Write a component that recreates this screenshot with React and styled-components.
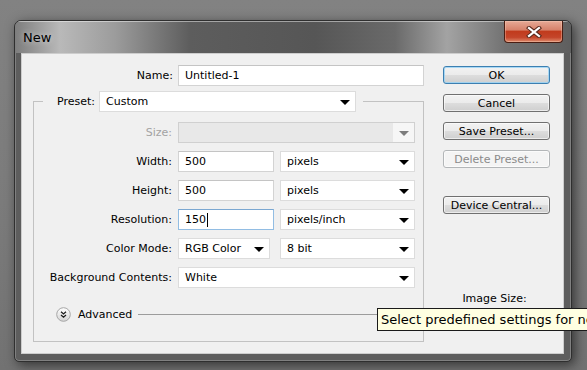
import React from "react";
import styled, { createGlobalStyle } from "styled-components";

const GlobalStyle = createGlobalStyle`
  html, body {
    margin: 0;
    padding: 0;
  }
  body {
    font-family: "DejaVu Sans", Tahoma, sans-serif;
    font-size: 11px;
    color: #000;
  }
`;

const Desktop = styled.div`
  position: relative;
  width: 587px;
  height: 370px;
  box-sizing: border-box;
  overflow: hidden;
  padding: 20px 0 0 14px;
  background: linear-gradient(180deg, #828282 0%, #7b7b7b 55%, #727272 100%);
`;

const Window = styled.div`
  width: 558px;
  height: 342px;
  box-sizing: border-box;
  border: 1px solid #2f2f2f;
  border-radius: 7px 7px 5px 5px;
  background: #5d5d5d;
  box-shadow: inset 0 0 0 1px rgba(255, 255, 255, 0.22), 3px 3px 12px rgba(0, 0, 0, 0.55);
  display: flex;
  flex-direction: column;
  overflow: hidden;
`;

const TitleBar = styled.div`
  height: 32px;
  display: flex;
  align-items: flex-start;
  justify-content: space-between;
  background: linear-gradient(
    90deg,
    #7d7d7d 0px,
    #b9b9b9 45px,
    #9c9c9c 100px,
    #5d5d5d 175px,
    #565656 300px,
    #6a6a6a 380px,
    #a3a3a3 432px,
    #727272 490px,
    #5e5e5e 558px
  );
  box-shadow: inset 0 1px 0 rgba(255, 255, 255, 0.45);
`;

const Title = styled.span`
  font-size: 13px;
  padding: 9px 0 0 8px;
  color: #000;
  text-shadow: 0 0 6px rgba(255, 255, 255, 0.6);
`;

const CloseButton = styled.div`
  width: 59px;
  height: 22px;
  margin-right: 8px;
  box-sizing: border-box;
  border: 1px solid #4a1d12;
  border-top: none;
  border-radius: 0 0 4px 4px;
  display: flex;
  align-items: center;
  justify-content: center;
  background: linear-gradient(
    180deg,
    #e6a996 0%,
    #d6826b 42%,
    #c13b1d 50%,
    #c4452a 78%,
    #de8c6d 100%
  );
  box-shadow: inset 0 0 0 1px rgba(255, 220, 200, 0.35);
`;

const Client = styled.div`
  flex: 1;
  margin: 0 7px 7px 6px;
  border: 1px solid #cdcdcd;
  background: #f0f0f0;
  display: flex;
  padding: 11px 0 0 11px;
`;

const FormPanel = styled.div`
  width: 391px;
  display: flex;
  flex-direction: column;
`;

const NameRow = styled.div`
  display: grid;
  grid-template-columns: 140px 1fr;
  column-gap: 5px;
  align-items: center;
`;

const Label = styled.span`
  text-align: right;
  white-space: nowrap;
  color: ${(p) => (p.$disabled ? "#a3a3a3" : "#000")};
`;

const TextField = styled.div`
  height: 21px;
  box-sizing: border-box;
  background: #fff;
  border: 1px solid ${(p) => (p.$focused ? "#92bde3" : "#d3d3d3")};
  border-top-color: ${(p) => (p.$focused ? "#7aa7d1" : "#c4c4c4")};
  display: flex;
  align-items: center;
  padding-left: 6px;
  width: ${(p) => (p.$width ? `${p.$width}px` : "auto")};
`;

const Caret = styled.span`
  display: inline-block;
  width: 1px;
  height: 14px;
  margin-left: 1px;
  background: #000;
`;

const Select = styled.div`
  height: 21px;
  box-sizing: border-box;
  background: ${(p) => (p.$disabled ? "#e8e8e8" : "#fff")};
  border: 1px solid ${(p) => (p.$disabled ? "#d0d0d0" : "#dcdcdc")};
  display: flex;
  align-items: center;
  padding-left: 6px;
  width: ${(p) => (p.$width ? `${p.$width}px` : "auto")};
`;

const SelectValue = styled.span`
  flex: 1;
  white-space: nowrap;
  overflow: hidden;
`;

const ArrowBox = styled.span`
  width: 21px;
  align-self: stretch;
  display: flex;
  align-items: center;
  justify-content: center;
  background: ${(p) => (p.$disabled ? "#f6f6f6" : "transparent")};

  &::after {
    content: "";
    border-left: 5px solid transparent;
    border-right: 5px solid transparent;
    border-top: 5px solid ${(p) => (p.$disabled ? "#7d7d7d" : "#000")};
    margin-top: 1px;
  }
`;

const Group = styled.fieldset`
  margin: 5px 0 0 0;
  padding: 0 8px 19px 0;
  border: 1px solid #c2c2c2;
  min-width: 0;
`;

const Legend = styled.legend`
  margin-left: 9px;
  padding: 0 7px 0 14px;
`;

const LegendInner = styled.div`
  display: flex;
  align-items: center;
  gap: 4px;
`;

const FormGrid = styled.div`
  display: grid;
  grid-template-columns: 138px 237px;
  column-gap: 6px;
  row-gap: 8px;
  grid-auto-rows: 21px;
  align-items: center;
  margin-top: 10px;
`;

const Pair = styled.div`
  display: flex;
  justify-content: space-between;
`;

const AdvancedRow = styled.div`
  display: flex;
  align-items: center;
  height: 15px;
  margin: 19px -8px 0 0;
  padding-left: 22px;
  gap: 7px;
`;

const AdvancedLine = styled.span`
  flex: 1;
  height: 1px;
  margin-left: -1px;
  background: #9c9c9c;
`;

const ButtonColumn = styled.div`
  margin: 1px 0 0 19px;
  width: 107px;
  display: flex;
  flex-direction: column;
  gap: 10px;
`;

const Button = styled.div`
  height: 18px;
  box-sizing: border-box;
  border: 1px solid ${(p) => (p.$default ? "#3c7fb1" : p.$disabled ? "#b3b6b8" : "#707070")};
  border-radius: 3px;
  display: flex;
  align-items: center;
  justify-content: center;
  color: ${(p) => (p.$disabled ? "#8a8a8a" : "#000")};
  background: ${(p) =>
    p.$disabled
      ? "#f4f4f4"
      : "linear-gradient(180deg, #f2f2f2 0%, #ebebeb 50%, #dddddd 51%, #cfcfcf 100%)"};
  box-shadow: ${(p) =>
    p.$default ? "inset 0 0 0 1px rgba(150, 210, 245, 0.8)" : "inset 0 0 0 1px rgba(255, 255, 255, 0.6)"};
  margin-top: ${(p) => p.$gapBefore || 0}px;
`;

const ImageSize = styled.div`
  margin-top: 68px;
  text-align: center;
  padding-right: 4px;
`;

const Tooltip = styled.div`
  position: absolute;
  left: 377px;
  top: 308px;
  height: 23px;
  width: 240px;
  box-sizing: border-box;
  border: 1px solid #1a1a1a;
  background: #ffffe1;
  font-size: 13px;
  display: flex;
  align-items: center;
  padding-left: 3px;
  white-space: nowrap;
`;

const Dropdown = ({ value, width, disabled }) => (
  <Select $width={width} $disabled={disabled}>
    <SelectValue>{value}</SelectValue>
    <ArrowBox $disabled={disabled} />
  </Select>
);

const CloseIcon = () => (
  <svg width="16" height="12" viewBox="0 0 16 12">
    <path d="M3 2 L13 10 M13 2 L3 10" stroke="#5a2a1e" strokeWidth="4.2" strokeLinecap="square" />
    <path d="M3 2 L13 10 M13 2 L3 10" stroke="#fff" strokeWidth="2.2" strokeLinecap="square" />
  </svg>
);

const AdvancedIcon = () => (
  <svg width="15" height="15" viewBox="0 0 15 15">
    <defs>
      <linearGradient id="advGrad" x1="0" y1="0" x2="0" y2="1">
        <stop offset="0" stopColor="#ffffff" />
        <stop offset="1" stopColor="#d4d4d4" />
      </linearGradient>
    </defs>
    <circle cx="7.5" cy="7.5" r="6.8" fill="url(#advGrad)" stroke="#a6a6a6" strokeWidth="1" />
    <path
      d="M5 4.8 L7.5 7 L10 4.8 M5 8 L7.5 10.2 L10 8"
      fill="none"
      stroke="#1e1e1e"
      strokeWidth="1.3"
    />
  </svg>
);

export default function App() {
  return (
    <>
      <GlobalStyle />
      <Desktop>
        <Window>
          <TitleBar>
            <Title>New</Title>
            <CloseButton>
              <CloseIcon />
            </CloseButton>
          </TitleBar>
          <Client>
            <FormPanel>
              <NameRow>
                <Label>Name:</Label>
                <TextField>Untitled-1</TextField>
              </NameRow>
              <Group>
                <Legend>
                  <LegendInner>
                    <Label>Preset:</Label>
                    <Dropdown value="Custom" width={257} />
                  </LegendInner>
                </Legend>
                <FormGrid>
                  <Label $disabled>Size:</Label>
                  <Dropdown value="" disabled />

                  <Label>Width:</Label>
                  <Pair>
                    <TextField $width={96}>500</TextField>
                    <Dropdown value="pixels" width={135} />
                  </Pair>

                  <Label>Height:</Label>
                  <Pair>
                    <TextField $width={96}>500</TextField>
                    <Dropdown value="pixels" width={135} />
                  </Pair>

                  <Label>Resolution:</Label>
                  <Pair>
                    <TextField $width={96} $focused>
                      150
                      <Caret />
                    </TextField>
                    <Dropdown value="pixels/inch" width={135} />
                  </Pair>

                  <Label>Color Mode:</Label>
                  <Pair>
                    <Dropdown value="RGB Color" width={92} />
                    <Dropdown value="8 bit" width={135} />
                  </Pair>

                  <Label>Background Contents:</Label>
                  <Dropdown value="White" />
                </FormGrid>
                <AdvancedRow>
                  <AdvancedIcon />
                  <span>Advanced</span>
                  <AdvancedLine />
                </AdvancedRow>
              </Group>
            </FormPanel>
            <ButtonColumn>
              <Button $default>OK</Button>
              <Button>Cancel</Button>
              <Button>Save Preset...</Button>
              <Button $disabled>Delete Preset...</Button>
              <Button $gapBefore={18}>Device Central...</Button>
              <ImageSize>Image Size:</ImageSize>
            </ButtonColumn>
          </Client>
        </Window>
        <Tooltip>Select predefined settings for new document</Tooltip>
      </Desktop>
    </>
  );
}
